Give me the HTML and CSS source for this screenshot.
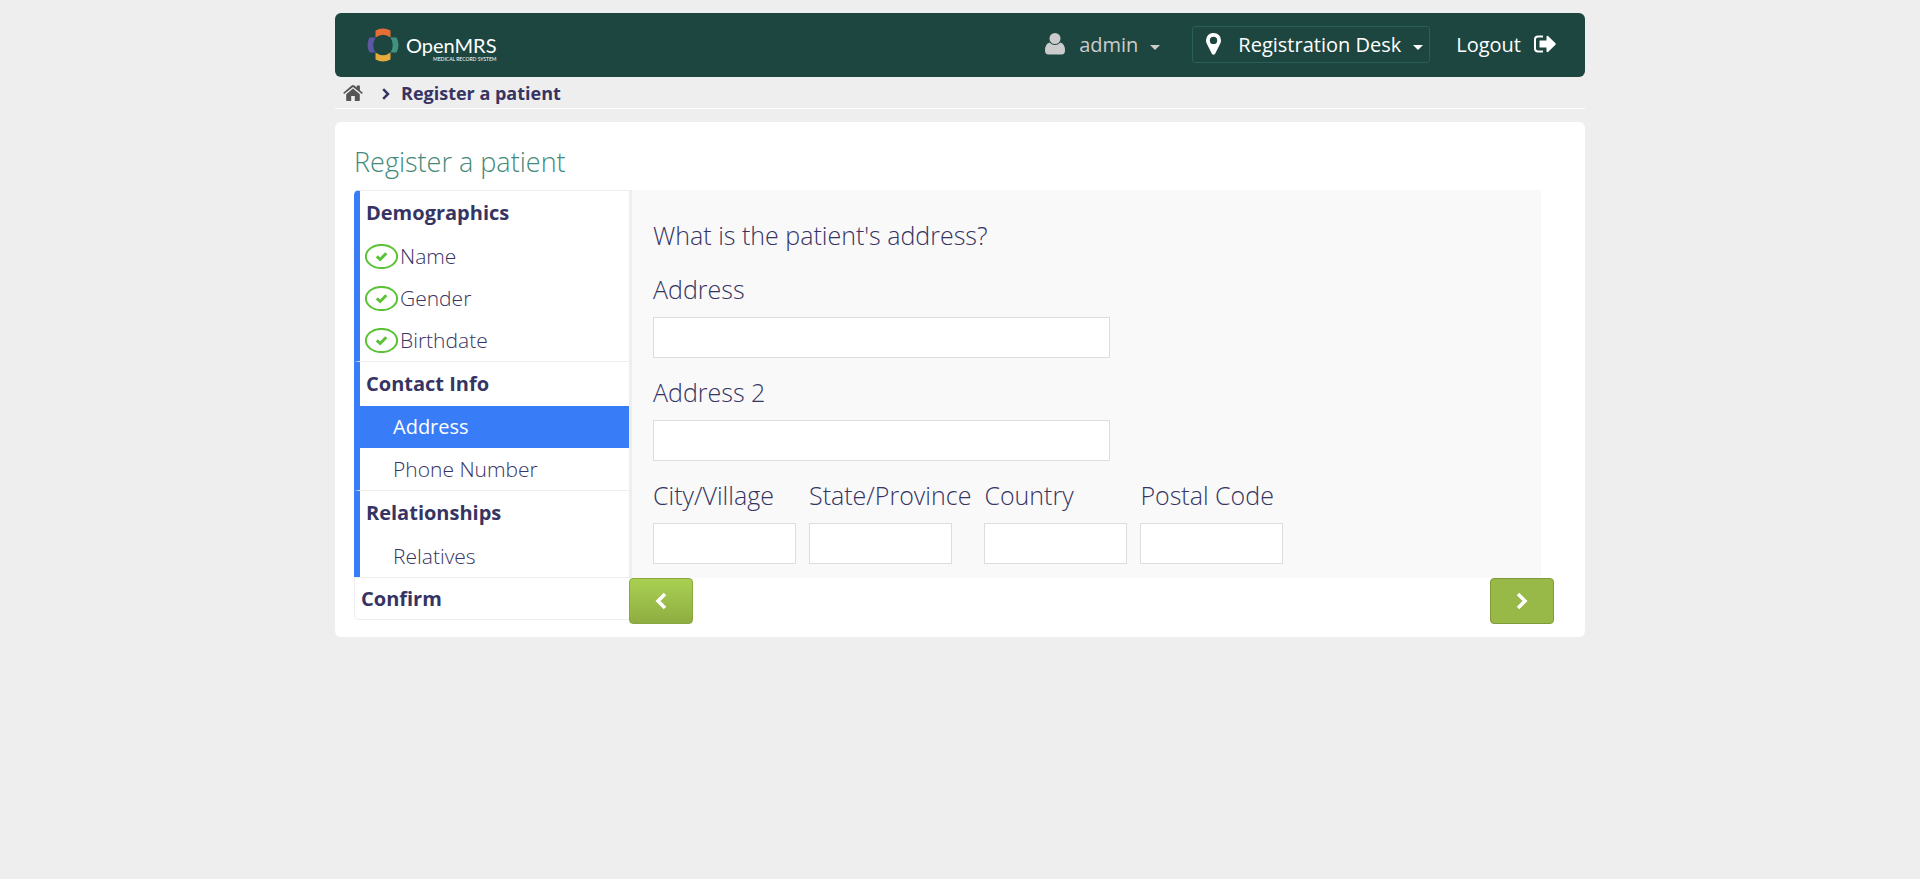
FILE: index.html
```html
<!DOCTYPE html>
<html lang="en">
<head>
<meta charset="utf-8">
<meta name="viewport" content="width=device-width, initial-scale=1">
<title>Register a patient</title>
<link rel="stylesheet" href="styles.css">
</head>
<body>
<div class="page">
  <header class="header">
    <a class="logo" href="#">
      <svg class="logo-mark" viewBox="0 0 32 34" aria-hidden="true">
        <path fill="#e66e36" d="M8.500 2.500Q16-1.500 23.500 2.500V9.500Q16 4 8.500 9.500Z"/>
        <path fill="#e7aa3c" d="M8.500 31.500Q16 35.500 23.500 31.500V24.500Q16 30 8.500 24.500Z"/>
        <path fill="#5b57a2" d="M2.500 9.500Q-1.500 17 2.500 24.500H8.500Q4 17 8.500 9.500Z"/>
        <path fill="#41937f" d="M29.500 9.500Q33.500 17 29.500 24.500H23.500Q28 17 23.500 9.500Z"/>
      </svg>
      <span class="logo-words">
        <span class="logo-name">OpenMRS</span>
        <span class="logo-tag">MEDICAL RECORD SYSTEM</span>
      </span>
    </a>
    <nav class="user-nav">
      <button class="nav-button nav-user" type="button">
        <svg class="icon-user" viewBox="0 0 20 22" aria-hidden="true"><circle cx="10" cy="5.500" r="5.500"/><path d="M4.500 9.500Q10 14.500 15.500 9.500Q20 11 20 17.500Q20 21.500 16.500 21.500H3.500Q0 21.500 0 17.500Q0 11 4.500 9.500Z"/></svg>
        <span>admin</span>
        <i class="caret"></i>
      </button>
      <button class="nav-button nav-location" type="button">
        <svg class="icon-pin" viewBox="0 0 15 22" aria-hidden="true"><path fill-rule="evenodd" d="M7.500 0A7.300 7.300 0 0 1 15 7.400Q15 9 14.300 10.500L9 21Q7.500 22.500 6 21L.7 10.500Q0 9 0 7.400A7.300 7.300 0 0 1 7.500 0ZM7.500 3.700A3.700 3.700 0 1 0 7.500 11.100A3.700 3.700 0 1 0 7.500 3.700Z"/></svg>
        <span>Registration Desk</span>
        <i class="caret"></i>
      </button>
      <a class="nav-logout" href="#">
        <span>Logout</span>
        <svg class="icon-logout" viewBox="0 0 22 18" aria-hidden="true"><path fill="none" stroke="currentColor" stroke-width="2" d="M9 1.500H4Q1 1.500 1 4.500V13.500Q1 16.500 4 16.500H9"/><path d="M6 5.500H12.500V1.500Q13 0.500 14 1L21.500 8.300Q22 9 21.500 9.700L14 17Q13 17.500 12.500 16.500V12.500H6Q5.500 12.500 5.500 12V6Q5.500 5.500 6 5.500Z"/></svg>
      </a>
    </nav>
  </header>

  <nav class="breadcrumbs" aria-label="Breadcrumb">
    <a class="home" href="#" aria-label="Home">
      <svg class="icon-home" viewBox="0 0 20 16" aria-hidden="true"><path d="M10 3.600L16.800 9.300V15.200Q16.800 16 16 16H11.800V11H8.200V16H4Q3.200 16 3.200 15.200V9.300Z"/><path d="M10 0Q10.700 0 11.300.5L13.700 2.600V.8Q13.700.4 14.100.4H16.500Q16.900.4 16.900.8V5.200L19.800 7.700L18.900 8.900L10 1.900L1.100 8.900L.2 7.700L8.700.5Q9.300 0 10 0Z"/></svg>
    </a>
    <svg class="icon-crumb" viewBox="0 0 8 12" aria-hidden="true"><path d="M1.200 1.200L6 6L1.200 10.800"/></svg>
    <span>Register a patient</span>
  </nav>

  <main class="card">
    <h1 class="title">Register a patient</h1>
    <div class="wizard">
      <aside class="steps">
        <section class="group">
          <h2 class="group-title">Demographics</h2>
          <a class="step" href="#"><svg class="icon-done" viewBox="0 0 33 25" aria-hidden="true"><ellipse cx="16.500" cy="12.500" rx="15.600" ry="11.600"/><path d="M11.800 12.300L15.200 15.500L21.300 9.300"/></svg>Name</a>
          <a class="step" href="#"><svg class="icon-done" viewBox="0 0 33 25" aria-hidden="true"><ellipse cx="16.500" cy="12.500" rx="15.600" ry="11.600"/><path d="M11.800 12.300L15.200 15.500L21.300 9.300"/></svg>Gender</a>
          <a class="step" href="#"><svg class="icon-done" viewBox="0 0 33 25" aria-hidden="true"><ellipse cx="16.500" cy="12.500" rx="15.600" ry="11.600"/><path d="M11.800 12.300L15.200 15.500L21.300 9.300"/></svg>Birthdate</a>
        </section>
        <section class="group">
          <h2 class="group-title">Contact Info</h2>
          <a class="step step-open step-current" href="#" aria-current="step">Address</a>
          <a class="step step-open" href="#">Phone Number</a>
        </section>
        <section class="group">
          <h2 class="group-title">Relationships</h2>
          <a class="step step-open" href="#">Relatives</a>
        </section>
        <section class="group group-confirm">
          <h2 class="group-title">Confirm</h2>
        </section>
      </aside>
      <form class="content">
        <fieldset class="fields">
          <legend class="question">What is the patient's address?</legend>
          <div class="field">
            <label for="address1">Address</label>
            <input class="wide" id="address1" type="text">
          </div>
          <div class="field">
            <label for="address2">Address 2</label>
            <input class="wide" id="address2" type="text">
          </div>
          <div class="field-row">
            <div class="field"><label for="city">City/Village</label><input id="city" type="text"></div>
            <div class="field"><label for="state">State/Province</label><input id="state" type="text"></div>
            <div class="field"><label for="country">Country</label><input id="country" type="text"></div>
            <div class="field"><label for="postal">Postal Code</label><input id="postal" type="text"></div>
          </div>
        </fieldset>
        <div class="actions">
          <button class="action" type="button" aria-label="Previous"><svg viewBox="0 0 12 18" aria-hidden="true"><path d="M10 2L3 9L10 16"/></svg></button>
          <button class="action action-next" type="button" aria-label="Next"><svg viewBox="0 0 12 18" aria-hidden="true"><path d="M2 2L9 9L2 16"/></svg></button>
        </div>
      </form>
    </div>
  </main>
</div>
</body>
</html>
```

FILE: styles.css
```css
* { box-sizing: border-box; }
body {
  margin: 0;
  background: #eee;
  color: #363463;
  font-family: "Open Sans", "Noto Sans", sans-serif;
  font-size: 20px;
  font-weight: 300;
}
a { color: inherit; text-decoration: none; }
button, input { font: inherit; color: inherit; }
svg { display: block; flex: none; fill: currentColor; }

.page { max-width: 1250px; margin: 0 auto; padding-top: 13px; }

.header {
  display: flex;
  align-items: center;
  justify-content: space-between;
  min-height: 64px;
  padding: 0 29px 2px 32px;
  border-radius: 6px;
  background: #1d4640;
  color: #fff;
  font-weight: 400;
}
.logo { display: flex; align-items: center; gap: 7px; padding-top: 2px; font-family: Lato, sans-serif; }
.logo-mark { width: 32px; height: 34px; }
.logo-words { display: flex; flex-direction: column; align-items: flex-end; padding-top: 4px; }
.logo-name { font-size: 20px; line-height: 24px; }
.logo-tag { font-size: 5px; line-height: 5px; }
.user-nav { display: flex; align-items: center; }
.nav-button {
  display: flex;
  align-items: center;
  padding: 0;
  border: 0;
  background: none;
  cursor: pointer;
}
.nav-user { color: #ccc; margin-right: 32px; gap: 14px; }
.nav-location {
  height: 37px;
  padding: 0 6px 0 13px;
  gap: 17px;
  border: 1px solid #285f57;
  border-radius: 3px;
  margin-right: 26px;
}
.nav-logout { display: flex; align-items: center; gap: 13px; }
.caret {
  border: 5px solid transparent;
  border-top-color: currentColor;
  border-bottom: 0;
  margin-top: 6px;
}
.nav-location .caret { margin-left: -5px; }
.nav-user .caret { margin-left: -2px; }
.icon-user { width: 20px; height: 22px; }
.icon-pin { width: 15px; height: 22px; }
.icon-logout { width: 22px; height: 18px; }

.breadcrumbs {
  display: flex;
  align-items: center;
  height: 32px;
  padding-left: 8px;
  border-bottom: 1px solid #fff;
  font-size: 18px;
  font-weight: 700;
}
.home { color: #555; }
.icon-home { width: 20px; height: 16px; }
.icon-crumb {
  width: 8px;
  height: 12px;
  margin: 2px 11px 0 19px;
  fill: none;
  stroke: currentColor;
  stroke-width: 2.500;
}

.card {
  margin-top: 13px;
  padding: 19px 31px 13px 19px;
  border-radius: 6px;
  background: #fff;
}
.title {
  margin: 0 0 7px;
  color: #448a7a;
  font-size: 27px;
  line-height: 42px;
  font-weight: 300;
}
.wizard { display: flex; align-items: flex-start; }
.steps { flex: 0 0 275px; }
.group {
  border-top: 1px solid #eee;
  border-left: 6px solid #387cf8;
}
.group:first-child { border-top-left-radius: 5px; }
.group-title {
  margin: 0 0 1px;
  padding-left: 6px;
  font-size: 20px;
  line-height: 43px;
  font-weight: 700;
}
.group-confirm {
  border: 1px solid #eee;
  border-right: 0;
  border-bottom-left-radius: 5px;
}
.group-confirm .group-title { margin: 0; line-height: 41px; }
.step {
  display: flex;
  align-items: center;
  gap: 2px;
  padding-left: 5px;
  font-size: 21px;
  line-height: 42px;
}
.step-open { padding-left: 33px; }
.step-current { background: #387cf8; color: #fff; font-size: 20px; font-weight: 400; }
.icon-done {
  width: 33px;
  height: 25px;
  fill: none;
  stroke: #5bc236;
  stroke-width: 2;
}
.icon-done path { stroke-width: 3; }

.content { flex: 1; min-width: 0; }
.fields {
  min-width: 0;
  margin: 0 13px 0 0;
  padding: 25px 20px 14px 21px;
  border: 0;
  border-left: 3px solid #eee;
  background: #f9f9f9;
  font-size: 25px;
}
.question { float: left; width: 100%; padding: 0; line-height: 40px; }
.field { clear: both; padding-top: 14px; }
.field label { display: block; line-height: 40px; }
.field input {
  display: block;
  width: 143px;
  height: 41px;
  margin-top: 8px;
  padding: 5px 10px;
  border: 1px solid #ddd;
  border-radius: 0;
  background: #fff;
}
.field .wide { width: 100%; max-width: 457px; }
.field-row { display: flex; flex-wrap: wrap; gap: 0 13px; }
.actions { display: flex; justify-content: space-between; }
.action {
  display: grid;
  place-items: center;
  width: 64px;
  height: 46px;
  padding: 0;
  border: 1px solid #8aa63f;
  border-radius: 4px;
  background: linear-gradient(#a9d051, #8fad42);
  color: #fff;
  cursor: pointer;
}
.action-next { background: #98b848; border-color: #80993c; }
.action svg {
  width: 12px;
  height: 18px;
  fill: none;
  stroke: currentColor;
  stroke-width: 3.500;
}
```
